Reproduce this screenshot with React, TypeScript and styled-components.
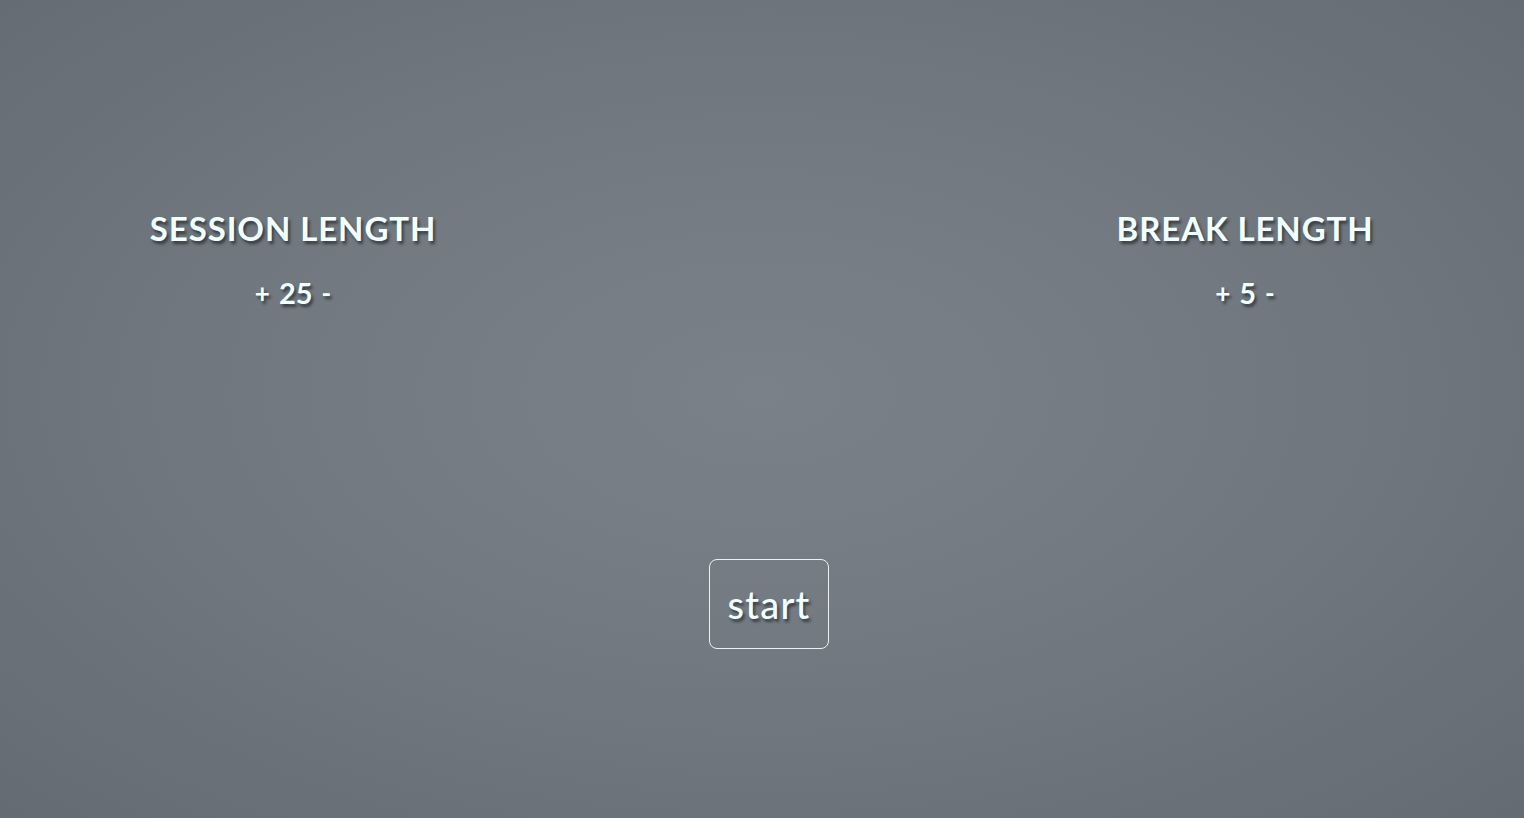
import React from "react";
import styled, { createGlobalStyle } from "styled-components";

const Global = createGlobalStyle`
  html, body { margin: 0; padding: 0; height: 100%; }
  body {
    font-family: "Lato", "Noto Sans", sans-serif;
    background: radial-gradient(ellipse at 50% 48%, #7b8189 0%, #737980 45%, #656b73 100%);
    background-attachment: fixed;
    min-height: 818px;
    overflow: hidden;
  }
`;

const Page = styled.main`
  width: 1524px;
  height: 818px;
  display: flex;
  flex-direction: column;
  color: #f0ffff;
  text-shadow: 2px 3px 3px rgba(30, 35, 40, 0.7);
`;

const Settings = styled.section`
  display: grid;
  grid-template-columns: 300px 1fr 300px;
  padding: 207px 129px 0 143px;
`;

const Setting = styled.div`
  display: flex;
  flex-direction: column;
  align-items: center;
`;

const Title = styled.h2`
  margin: 0;
  font-size: 33px;
  font-weight: 700;
  line-height: 42px;
  letter-spacing: 0.9px;
  white-space: nowrap;
`;

const Controls = styled.div`
  margin-top: 28px;
  display: flex;
  align-items: center;
  gap: 9px;
  font-size: 29px;
  font-weight: 700;
  line-height: 32px;
`;

const Sign = styled.span`
  font-size: 26px;
  cursor: pointer;
`;

const Footer = styled.div`
  display: flex;
  justify-content: center;
  margin-top: 250px;
  padding-left: 14px;
`;

const StartButton = styled.button`
  width: 120px;
  height: 90px;
  box-sizing: border-box;
  background: transparent;
  border: 1px solid #e8f4f4;
  border-radius: 8px;
  color: #f0ffff;
  font-family: "Lato", "Noto Sans", sans-serif;
  font-size: 38px;
  font-weight: 500;
  letter-spacing: 1.2px;
  text-shadow: 2px 3px 3px rgba(30, 35, 40, 0.7);
  cursor: pointer;
  padding: 0;
`;

export default function App() {
  return (
    <>
      <Global />
      <Page>
        <Settings>
          <Setting>
            <Title>SESSION LENGTH</Title>
            <Controls>
              <Sign>+</Sign>
              <span>25</span>
              <Sign>-</Sign>
            </Controls>
          </Setting>
          <div />
          <Setting>
            <Title>BREAK LENGTH</Title>
            <Controls>
              <Sign>+</Sign>
              <span>5</span>
              <Sign>-</Sign>
            </Controls>
          </Setting>
        </Settings>
        <Footer>
          <StartButton>start</StartButton>
        </Footer>
      </Page>
    </>
  );
}
